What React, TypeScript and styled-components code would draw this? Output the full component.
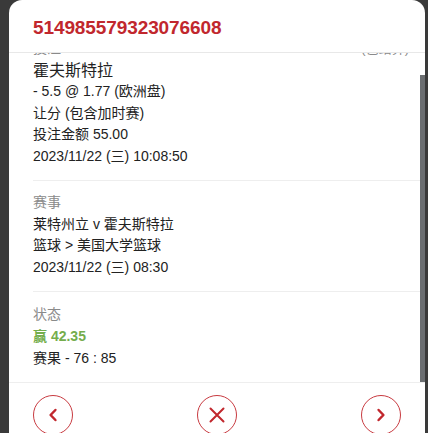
import { useLayoutEffect, useRef } from 'react';
import styled, { createGlobalStyle } from 'styled-components';

const GlobalStyle = createGlobalStyle`
    html, body {
        margin: 0;
        padding: 0;
        height: 433px;
        overflow: hidden;
        background: #3a3a3a;
    }
    * {
        box-sizing: border-box;
    }
`;

interface IsectionLine {
    text: string;
    kind?: 'name' | 'win';
}

interface Isection {
    label: string;
    aside?: string;
    lines: IsectionLine[];
}

const sections: Isection[] = [
    {
        label: '投注',
        aside: '(已结算)',
        lines: [
            { text: '霍夫斯特拉', kind: 'name' },
            { text: '- 5.5 @ 1.77 (欧洲盘)' },
            { text: '让分 (包含加时赛)' },
            { text: '投注金额 55.00' },
            { text: '2023/11/22 (三) 10:08:50' },
        ],
    },
    {
        label: '赛事',
        lines: [
            { text: '莱特州立 v 霍夫斯特拉' },
            { text: '篮球 > 美国大学篮球' },
            { text: '2023/11/22 (三) 08:30' },
        ],
    },
    {
        label: '状态',
        lines: [{ text: '赢 42.35', kind: 'win' }, { text: '赛果 - 76 : 85' }],
    },
];

const ChevronIcon = ({ right }: { right?: boolean }) => (
    <svg width="20" height="20" viewBox="0 0 20 20" fill="none">
        <path
            d={right ? 'M7.6 5 L12.4 10 L7.6 15' : 'M12.4 5 L7.6 10 L12.4 15'}
            stroke="#c1272d"
            strokeWidth="2.5"
            strokeLinecap="round"
            strokeLinejoin="round"
        />
    </svg>
);

const CloseIcon = () => (
    <svg width="20" height="20" viewBox="0 0 20 20" fill="none">
        <path d="M3.5 3.5 L16.5 16.5 M16.5 3.5 L3.5 16.5" stroke="#c1272d" strokeWidth="2" strokeLinecap="round" />
    </svg>
);

export default function App() {
    const scrollRef = useRef<HTMLDivElement>(null);

    useLayoutEffect(() => {
        const el = scrollRef.current;
        if (el) el.scrollTop = el.scrollHeight;
    }, []);

    return (
        <Backdrop>
            <GlobalStyle />
            <Modal>
                <Header>
                    <Title>514985579323076608</Title>
                </Header>
                <BodyWrap>
                    <Body ref={scrollRef}>
                        {sections.map(section => (
                            <Section key={section.label}>
                                <LabelRow>
                                    <Label>{section.label}</Label>
                                    {section.aside && <Aside>{section.aside}</Aside>}
                                </LabelRow>
                                {section.lines.map(line => (
                                    <Line key={line.text} kind={line.kind}>
                                        {line.text}
                                    </Line>
                                ))}
                            </Section>
                        ))}
                    </Body>
                    {/* headless chrome hides native scrollbars, so draw the thumb */}
                    <ScrollThumb />
                </BodyWrap>
                <Footer>
                    <RoundButton aria-label="上一个">
                        <ChevronIcon />
                    </RoundButton>
                    <RoundButton aria-label="关闭">
                        <CloseIcon />
                    </RoundButton>
                    <RoundButton aria-label="下一个">
                        <ChevronIcon right />
                    </RoundButton>
                </Footer>
            </Modal>
        </Backdrop>
    );
}

const Backdrop = styled.div`
    width: 428px;
    height: 433px;
    padding: 0 3px 0 9px;
    background: #3a3a3a;
    overflow: hidden;
    font-family: 'Liberation Sans', Arial, 'Noto Sans CJK SC', sans-serif;
`;

const Modal = styled.div`
    width: 416px;
    height: 447px;
    background: #fff;
    border-radius: 13px 13px 0 0;
    display: flex;
    flex-direction: column;
`;

const Header = styled.div`
    height: 53px;
    flex-shrink: 0;
    padding: 3px 24px 0;
    display: flex;
    align-items: center;
    border-bottom: 1px solid #e8e8e8;
`;

const Title = styled.h1`
    margin: 0;
    color: #c1272d;
    font-size: 19px;
    font-weight: 700;
    letter-spacing: -0.1px;
`;

const BodyWrap = styled.div`
    position: relative;
    height: 329px;
    flex-shrink: 0;
`;

const Body = styled.div`
    height: 100%;
    overflow-y: auto;
    scrollbar-width: none;
`;

const ScrollThumb = styled.div`
    position: absolute;
    top: 22px;
    right: 0;
    width: 5px;
    height: 307px;
    background: #6b6e71;
`;

const Section = styled.div`
    margin-left: 24px;
    padding: 11px 16px 13px 0;
    border-bottom: 1px solid #eeeeee;

    &:first-child {
        padding-bottom: 12.5px;
    }
    &:last-child {
        border-bottom: none;
        padding: 12px 16px 13px 0;
    }
`;

const LabelRow = styled.div`
    height: 21.6px;
    display: flex;
    justify-content: space-between;
    align-items: center;
`;

const Label = styled.div`
    color: #8a8a8a;
    font-size: 14px;
    line-height: 21.6px;
`;

const Aside = styled.div`
    color: #8a8a8a;
    font-size: 13px;
    line-height: 21.6px;
`;

const Line = styled.div<{ kind?: 'name' | 'win' }>`
    height: 21.6px;
    color: #222;
    font-size: ${props => (props.kind === 'name' ? '16px' : '14px')};
    font-weight: ${props => (props.kind === 'win' ? 700 : 400)};
    line-height: 21.6px;
    white-space: nowrap;
    ${props => props.kind === 'win' && 'color: #74ad4c;'}
`;

const Footer = styled.div`
    flex-shrink: 0;
    padding: 12px 24px;
    border-top: 1px solid #eeeeee;
    display: flex;
    justify-content: space-between;
`;

const RoundButton = styled.button`
    width: 40px;
    height: 40px;
    padding: 0;
    border: 1px solid #c83a40;
    border-radius: 50%;
    background: #fff;
    display: flex;
    align-items: center;
    justify-content: center;
    cursor: pointer;
`;
